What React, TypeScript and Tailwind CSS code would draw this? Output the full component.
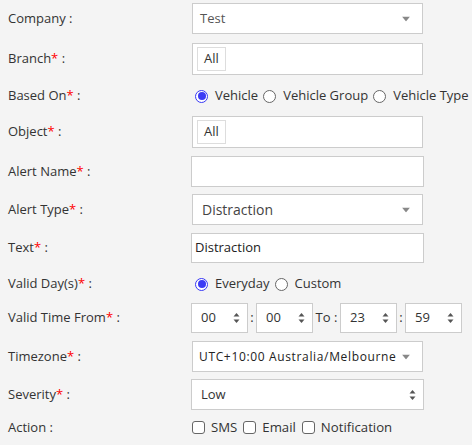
import React from "react";

const Label = ({ text, req }: { text: string; req?: boolean }) => (
	<div className="w-[184px] shrink-0 text-[13px] text-[#333]">
		{text}
		{req && <span className="text-[#ff0000]">*</span>} :
	</div>
);

const Arrow = () => (
	<svg width="8" height="5" viewBox="0 0 8 5" className="absolute right-[12px] top-1/2 -translate-y-1/2">
		<path d="M0 0 L8 0 L4 5 Z" fill="#888" />
	</svg>
);

const Spin = () => (
	<svg width="7" height="11" viewBox="0 0 7 11" className="absolute right-[7px] top-1/2 -translate-y-1/2">
		<path d="M0.5 4 L3.5 0.5 L6.5 4 Z" fill="#555" />
		<path d="M0.5 7 L3.5 10.5 L6.5 7 Z" fill="#555" />
	</svg>
);

const Radio = ({ on, label }: { on?: boolean; label: string }) => (
	<span className="flex items-center shrink-0">
		<span
			className={
				on
					? "w-[13px] h-[13px] shrink-0 rounded-full border border-[#3737f5] flex items-center justify-center bg-white"
					: "w-[13px] h-[13px] shrink-0 rounded-full border border-[#666] bg-white"
			}
		>
			{on && <span className="w-[8px] h-[8px] rounded-full bg-[#3c3cf5]" />}
		</span>
		<span className="ml-[7px] mr-[5px] whitespace-nowrap text-[13px] text-[#333]">{label}</span>
	</span>
);

const Check = ({ label }: { label: string }) => (
	<span className="flex items-center shrink-0">
		<span className="w-[13px] h-[13px] shrink-0 rounded-[3px] border border-[#666] bg-white" />
		<span className="ml-[6px] mr-[6px] whitespace-nowrap text-[13.2px] text-[#333]">{label}</span>
	</span>
);

const Chip = () => (
	<div className="h-[32px] w-[231px] border border-[#ccc] bg-white flex items-center pl-[4px]">
		<span className="border border-[#ddd] px-[6px] h-[24px] flex items-center text-[13px] text-[#333]">All</span>
	</div>
);

const TimeBox = ({ v }: { v: string }) => (
	<div className="relative h-[30px] w-[57px] shrink-0 border border-[#ccc] bg-white flex items-center pl-[9px] text-[13px] text-[#333]">
		{v}
		<Spin />
	</div>
);

export default function App() {
	return (
		<div className="w-[472px] h-[445px] bg-[#f4f4f4] pl-[8px] font-['Open_Sans',sans-serif] overflow-hidden">
			<div className="flex items-center mt-[3px]">
				<Label text="Company" />
				<div className="relative h-[31px] w-[231px] border border-[#ccc] bg-white flex items-center pl-[7px] text-[13px] text-[#555]">
					Test
					<Arrow />
				</div>
			</div>
			<div className="flex items-center mt-[9px]">
				<Label text="Branch" req />
				<Chip />
			</div>
			<div className="flex items-center mt-[11px] h-[20px] w-[520px]">
				<Label text="Based On" req />
				<div className="flex items-center ml-[3px]">
					<Radio on label="Vehicle" />
					<Radio label="Vehicle Group" />
					<Radio label="Vehicle Type" />
				</div>
			</div>
			<div className="flex items-center mt-[10px]">
				<Label text="Object" req />
				<Chip />
			</div>
			<div className="flex items-center mt-[8px]">
				<Label text="Alert Name" req />
				<div className="h-[31px] w-[233px] -ml-[1px] border border-[#ccc] bg-white" />
			</div>
			<div className="flex items-center mt-[7px]">
				<Label text="Alert Type" req />
				<div className="relative h-[31px] w-[231px] border border-[#ccc] bg-white flex items-center pl-[9px] text-[14px] text-[#444]">
					Distraction
					<Arrow />
				</div>
			</div>
			<div className="flex items-center mt-[8px]">
				<Label text="Text" req />
				<div className="h-[30px] w-[233px] -ml-[1px] border border-[#ccc] bg-white flex items-center pl-[3px] text-[13px] text-[#222]">
					Distraction
				</div>
			</div>
			<div className="flex items-center mt-[11px] h-[20px]">
				<Label text="Valid Day(s)" req />
				<div className="flex items-center ml-[3px]">
					<Radio on label="Everyday" />
					<Radio label="Custom" />
				</div>
			</div>
			<div className="flex items-center mt-[9px]">
				<Label text="Valid Time From" req />
				<div className="flex items-center -ml-[1px] text-[13px] text-[#333]">
					<TimeBox v="00" />
					<span className="w-[8px] text-center">:</span>
					<TimeBox v="00" />
					<span className="w-[27px] text-center whitespace-nowrap">To :</span>
					<TimeBox v="23" />
					<span className="w-[8px] text-center">:</span>
					<TimeBox v="59" />
				</div>
			</div>
			<div className="flex items-center mt-[8px]">
				<Label text="Timezone" req />
				<div className="relative h-[31px] w-[231px] border border-[#ccc] bg-white flex items-center pl-[6px] text-[12px] tracking-[0.65px] text-[#222] whitespace-nowrap">
					UTC+10:00 Australia/Melbourne
					<Arrow />
				</div>
			</div>
			<div className="flex items-center mt-[7px]">
				<Label text="Severity" req />
				<div className="relative h-[31px] w-[233px] -ml-[1px] border border-[#ccc] bg-white flex items-center pl-[9px] text-[13px] text-[#333]">
					Low
					<Spin />
				</div>
			</div>
			<div className="flex items-center mt-[8px] h-[20px]">
				<Label text="Action" />
				<div className="flex items-center">
					<Check label="SMS" />
					<Check label="Email" />
					<Check label="Notification" />
				</div>
			</div>
		</div>
	);
}
